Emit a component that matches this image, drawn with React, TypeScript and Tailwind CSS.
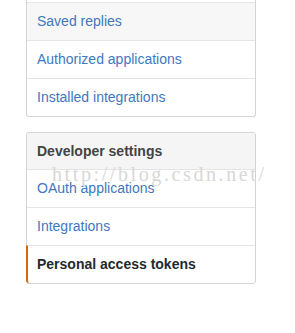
import React from "react";

const font = { fontFamily: '"Segoe UI", "Liberation Sans", Arial, sans-serif' };

export default function App() {
  return (
    <div className="relative w-[295px] h-[333px] bg-white overflow-hidden" style={font}>
      <div className="ml-[26px] w-[230px] border-x border-b border-[#d1d5da] rounded-b-[3px] text-[14px]">
        <div className="h-[2px]" />
        <div className="h-[38px] border-t border-[#e5e5e5] bg-[#f7f7f7] pl-[10px] flex items-center text-[#4078c0]">
          Saved replies
        </div>
        <div className="h-[38px] border-t border-[#e5e5e5] pl-[10px] flex items-center text-[#4078c0]">
          Authorized applications
        </div>
        <div className="h-[38px] border-t border-[#e5e5e5] pl-[10px] flex items-center text-[#4078c0]">
          Installed integrations
        </div>
      </div>
      <div className="ml-[26px] mt-[15px] w-[230px] border border-[#d1d5da] rounded-[3px] text-[14px]">
        <div className="h-[36px] bg-[#f5f5f5] pl-[10px] flex items-center font-bold text-[#444] rounded-t-[3px]">
          Developer settings
        </div>
        <div className="h-[38px] border-t border-[#e5e5e5] pl-[10px] flex items-center text-[#4078c0]">
          OAuth applications
        </div>
        <div className="h-[38px] border-t border-[#e5e5e5] pl-[10px] flex items-center text-[#4078c0]">
          Integrations
        </div>
        <div className="h-[38px] border-t border-[#e5e5e5] pl-[9px] border-l-2 border-l-[#d26911] -ml-px flex items-center font-bold text-[#24292e] rounded-bl-[3px]">
          Personal access tokens
        </div>
      </div>
      <div
        className="absolute left-[52px] top-[159px] text-[20px] tracking-[2.6px] text-[#d8d8d8] whitespace-nowrap pointer-events-none"
        style={{ fontFamily: '"Liberation Serif", "DejaVu Serif", serif' }}
      >
        http://blog.csdn.net/
      </div>
    </div>
  );
}
